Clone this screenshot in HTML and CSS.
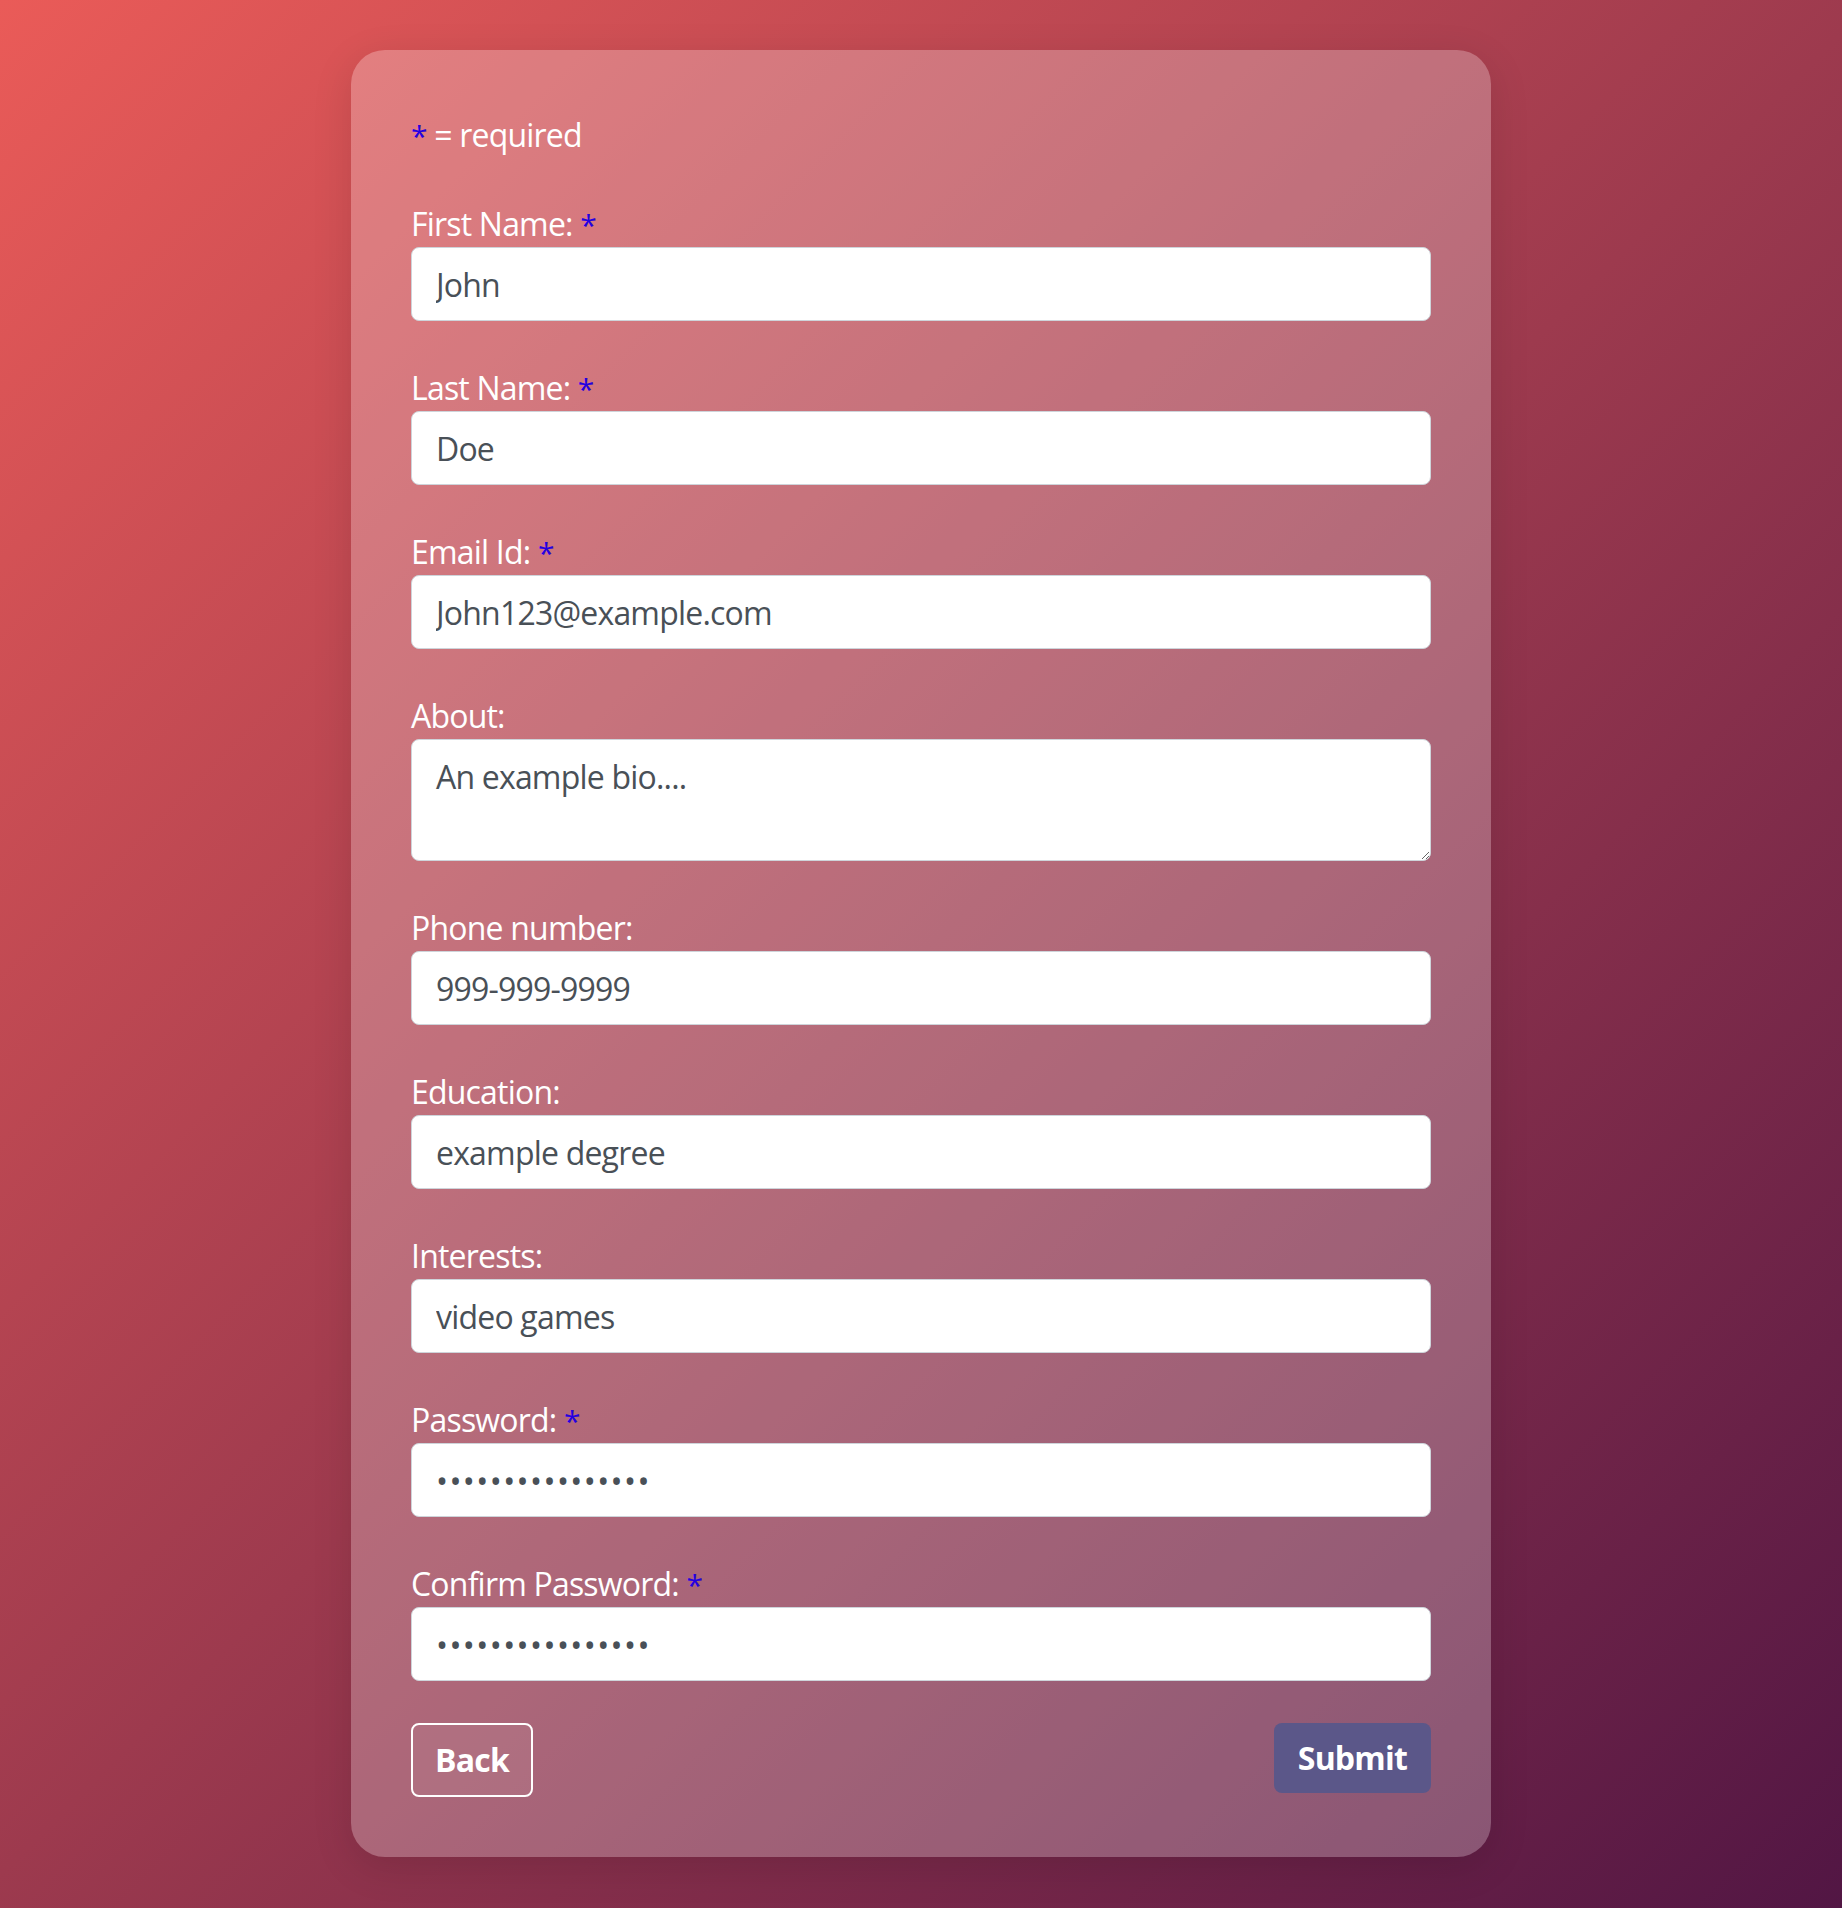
FILE: index.html
```html
<!DOCTYPE html>
<html lang="en">
<head>
<meta charset="utf-8">
<title>Sign up</title>
<link rel="stylesheet" href="styles.css">
</head>
<body>
<div class="card">
  <form class="form">
    <p class="note"><span class="req">*</span> = required</p>
    <div class="field">
      <label class="label">First Name: <span class="req">*</span></label>
      <input class="control" type="text" value="John">
    </div>
    <div class="field">
      <label class="label">Last Name: <span class="req">*</span></label>
      <input class="control" type="text" value="Doe">
    </div>
    <div class="field">
      <label class="label">Email Id: <span class="req">*</span></label>
      <input class="control" type="email" value="John123@example.com">
    </div>
    <div class="field">
      <label class="label">About:</label>
      <textarea class="control area" rows="2">An example bio....</textarea>
    </div>
    <div class="field">
      <label class="label">Phone number:</label>
      <input class="control" type="text" value="999-999-9999">
    </div>
    <div class="field">
      <label class="label">Education:</label>
      <input class="control" type="text" value="example degree">
    </div>
    <div class="field">
      <label class="label">Interests:</label>
      <input class="control" type="text" value="video games">
    </div>
    <div class="field">
      <label class="label">Password: <span class="req">*</span></label>
      <input class="control secret" type="password" value="passwordpass1234">
    </div>
    <div class="field">
      <label class="label">Confirm Password: <span class="req">*</span></label>
      <input class="control secret" type="password" value="passwordpass1234">
    </div>
    <div class="actions">
      <button class="btn btn-back" type="button">Back</button>
      <button class="btn btn-submit" type="button">Submit</button>
    </div>
  </form>
</div>
</body>
</html>
```
FILE: styles.css
```css
html, body {
  margin: 0;
  padding: 0;
}
body {
  min-height: 1908px;
  box-sizing: border-box;
  padding: 50px 0 51px;
  background: linear-gradient(135deg, #ea5b58 0%, #9d3a4e 50%, #521644 100%);
  font-family: "Open Sans", "Noto Sans", sans-serif;
  font-size: 32px;
  line-height: 48px;
  letter-spacing: -0.8px;
  color: #fff;
}
.card {
  width: 1140px;
  margin: 0 auto;
  box-sizing: border-box;
  padding: 60px;
  border-radius: 34px;
  background: rgba(255, 255, 255, 0.25);
  box-shadow: 0 10px 40px rgba(0, 0, 0, 0.12);
}
.form {
  margin: 0;
}
.note {
  margin: 0 0 41px;
  position: relative;
  top: 1px;
}
.req {
  color: #2400e0;
  font-size: 30px;
  line-height: 1;
}
.field {
  margin-bottom: 42px;
}
.label {
  display: block;
  position: relative;
  top: 1px;
}
.control {
  display: block;
  width: 100%;
  box-sizing: border-box;
  margin: 0;
  padding: 13px 24px 11px;
  font-family: inherit;
  font-size: 32px;
  line-height: 48px;
  letter-spacing: -0.8px;
  color: #495057;
  background: #fff;
  border: 1px solid #ced4da;
  border-radius: 8px;
  outline: none;
}
.secret {
  letter-spacing: 1.4px;
}
.area {
  resize: vertical;
  height: 122px;
}
.actions {
  display: flex;
  justify-content: space-between;
  align-items: flex-start;
}
.btn {
  font-family: inherit;
  font-size: 32px;
  font-weight: 700;
  line-height: 48px;
  letter-spacing: -0.8px;
  color: #fff;
  border-radius: 8px;
  cursor: pointer;
}
.btn-back {
  padding: 11px 22px;
  background: rgba(255, 255, 255, 0.06);
  border: 2px solid #fff;
}
.btn-submit {
  padding: 11px 24px;
  background: #5b5789;
  border: none;
}
```
